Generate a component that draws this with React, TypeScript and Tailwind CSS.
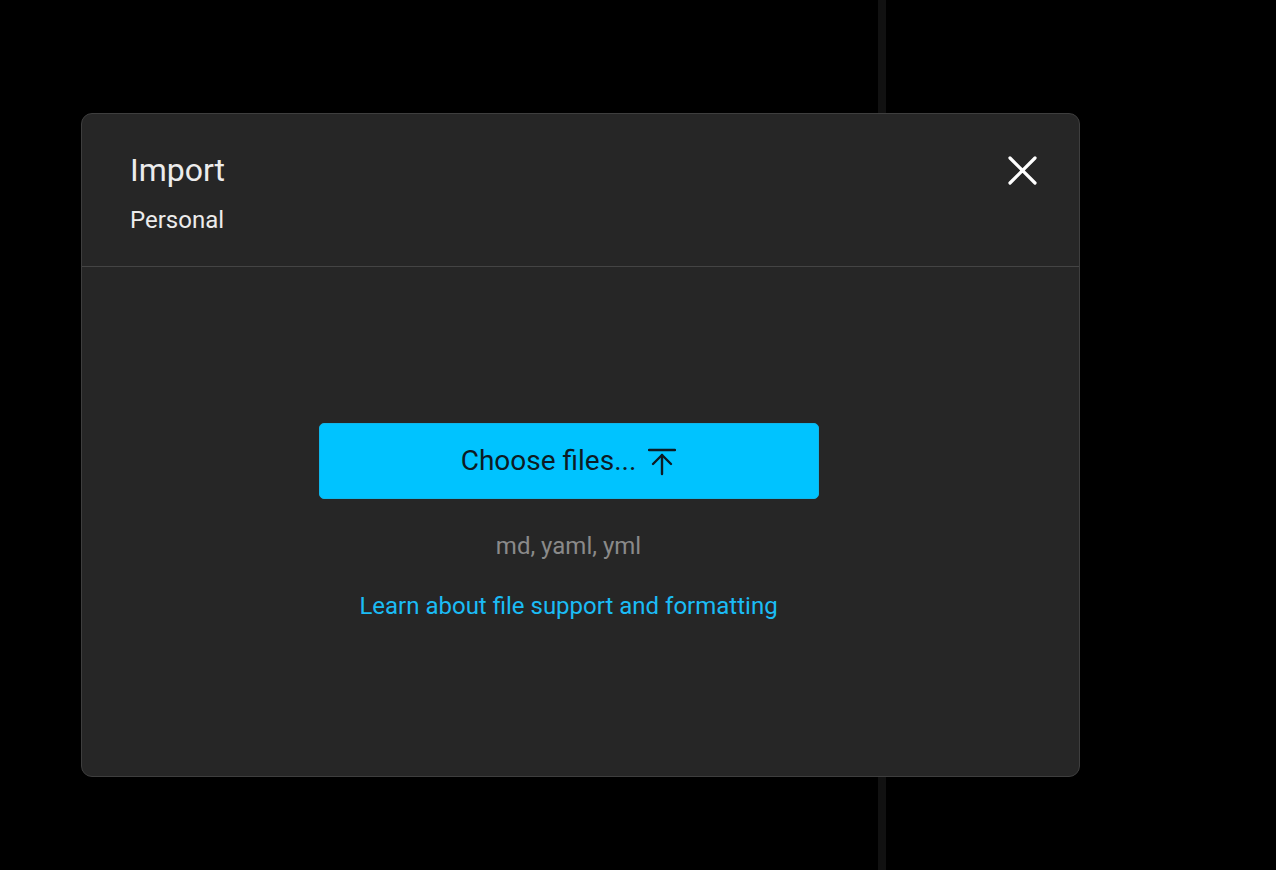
import React from "react";

export default function App() {
  return (
    <div className="relative w-[1276px] h-[870px] bg-black overflow-hidden" style={{ fontFamily: "Roboto, 'Noto Sans', sans-serif" }}>
      <div className="flex h-full">
        <div className="w-[878px] h-full" />
        <div className="w-[8px] h-full bg-[#111111]" />
        <div className="flex-1 h-full" />
      </div>

      <div className="absolute left-[81px] top-[113px] w-[999px] h-[664px] bg-[#262626] border border-[#3e3e3e] rounded-[11px] flex flex-col">
        <div className="h-[153px] border-b border-[#444444] flex items-start justify-between pl-[48px] pr-[42px] pt-[36px]">
          <div className="flex flex-col">
            <div className="text-[32px] leading-[40px] text-[#ececec]">Import</div>
            <div className="text-[24px] leading-[30px] mt-[15px] text-[#ececec]">Personal</div>
          </div>
          <button className="w-[30px] h-[30px] mt-[5px] flex items-center justify-center text-white">
            <svg width="29" height="29" viewBox="0 0 29 29" fill="none" stroke="currentColor" strokeWidth="3.2" strokeLinecap="round">
              <path d="M2 2 L27 27 M27 2 L2 27" />
            </svg>
          </button>
        </div>
        <div className="flex-1 flex flex-col items-center pl-[48px] pr-[72px] pt-[156px]">
          <button className="w-[500px] h-[76px] rounded-[5px] bg-[#00c3ff] border border-[#0fb6ea] flex items-center justify-center gap-[12px] text-[#0d1b24]">
            <span className="text-[28px] leading-[34px]">Choose files...</span>
            <svg width="28" height="28" viewBox="0 0 28 28" fill="none" stroke="currentColor" strokeWidth="2.4" strokeLinecap="round" strokeLinejoin="round" className="mt-[1px]">
              <path d="M1 2 H27" />
              <path d="M14 7 V26" />
              <path d="M5 16 L14 7 L23 16" />
            </svg>
          </button>
          <div className="mt-[32px] text-[24px] leading-[30px] text-[#8a8a8a]">md, yaml, yml</div>
          <a className="mt-[30px] text-[24px] leading-[30px] text-[#1bbcf5]">Learn about file support and formatting</a>
        </div>
      </div>
    </div>
  );
}
